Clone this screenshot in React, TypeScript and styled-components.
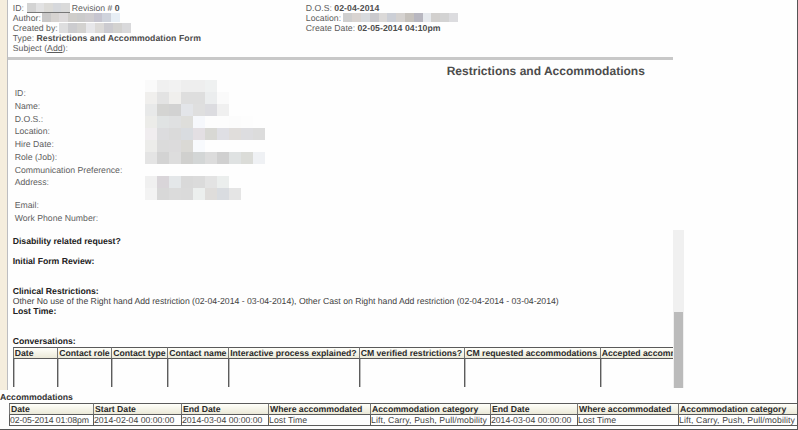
import React from "react";
import styled, { createGlobalStyle } from "styled-components";

const GlobalStyle = createGlobalStyle`
  *, *::before, *::after { box-sizing: border-box; }
  body {
    margin: 0;
    background: #fff;
    font-family: "Liberation Sans", Arial, sans-serif;
    font-size: 8.7px;
    text-rendering: geometricPrecision;
  }
`;

const Page = styled.div`
  width: 798px;
  height: 430px;
  overflow: hidden;
  display: flex;
  flex-direction: column;
  background: #fefefe;
  border-right: 1px solid #555;
  border-bottom: 1px solid #555;
`;

const Workspace = styled.div`
  display: flex;
  flex: none;
  height: 390px;
`;

const Gutter = styled.div`
  flex: none;
  width: 8px;
  background: #f5eddd;
  border-right: 1px solid #bdbdc0;
`;

const Document = styled.div`
  width: 665px;
  flex: none;
  overflow: hidden;
`;

const Meta = styled.header`
  display: grid;
  grid-template-columns: 293px 1fr;
  height: 60px;
  padding: 2.5px 0 0 4.8px;
  border-bottom: 3px solid #c8c8c8;
  color: #5c5c5c;
`;

const MetaLine = styled.div`
  display: flex;
  height: 10px;
  line-height: 10px;
  white-space: pre;
`;

const Strong = styled.b`
  color: #4c4c4c;
  letter-spacing: 0.06px;
`;

const AddLink = styled.a`
  text-decoration: underline;
`;

const Redacted = styled.span<{ $left?: number; $right?: number; $line?: boolean }>`
  display: flex;
  height: 10px;
  margin: 0 ${(p) => p.$right ?? 0}px 0 ${(p) => p.$left ?? 0}px;
  border-bottom: ${(p) => (p.$line ? "1px solid #777" : "none")};
`;

const Block = styled.i<{ $tone: string; $w: number; $h: number }>`
  flex: none;
  width: ${(p) => p.$w}px;
  height: ${(p) => p.$h}px;
  background: ${(p) => p.$tone};
`;

const Title = styled.h1`
  margin: 0;
  height: 20px;
  padding-left: 438.7px;
  font-size: 12px;
  letter-spacing: 0.02px;
  line-height: 22px;
  color: #4c4c4c;
  white-space: nowrap;
`;

const Profile = styled.section`
  display: grid;
  grid-template-columns: 130px 1fr;
  height: 155px;
  padding-left: 6.7px;
  color: #606060;
`;

const Labels = styled.div`
  padding-top: 7px;
`;

const Label = styled.div<{ $gap?: number }>`
  height: 12.75px;
  line-height: 12.75px;
  margin-top: ${(p) => p.$gap ?? 0}px;
  white-space: nowrap;
`;

const MosaicRow = styled.div`
  display: flex;
  height: 12px;
`;

const Notes = styled.section`
  height: 155px;
  padding: 1px 0 0 4.7px;
  color: #222;
`;

const Note = styled.div<{ $after?: number; $bold?: boolean }>`
  height: 10px;
  line-height: 10px;
  margin-bottom: ${(p) => p.$after ?? 0}px;
  font-weight: ${(p) => (p.$bold ? 700 : 400)};
  letter-spacing: ${(p) => (p.$bold ? -0.02 : -0.015)}px;
  color: ${(p) => (p.$bold ? "#222" : "#444")};
  white-space: nowrap;
`;

const ConversationGrid = styled.div`
  display: grid;
  grid-template-columns: 44.5px 54px 56px 61px 130.5px 105.5px 135.5px 150px;
  width: 737px;
`;

const HeadCell = styled.div`
  height: 12px;
  padding-left: 1px;
  line-height: 10.5px;
  font-weight: 700;
  color: #2b2b2b;
  background: linear-gradient(#fffffa, #ebe9d8);
  border: 1px solid #5a5a5a;
  border-left-color: #777;
  border-right-width: 0;
  letter-spacing: -0.02px;
  white-space: nowrap;
`;

const EmptyCell = styled.div`
  height: 28px;
  border-left: 1px solid #5c5c5c;
  box-shadow: inset 1px 0 #bbb;
`;

const ScrollTrack = styled.div`
  flex: none;
  width: 11px;
  height: 158px;
  margin-top: 230px;
  padding: 82px 1px 0;
  background: #f0f0f0;
`;

const ScrollThumb = styled.div`
  height: 76px;
  background: #bbb;
`;

const Accommodations = styled.section`
  height: 39px;
`;

const Caption = styled.div`
  height: 13px;
  line-height: 14px;
  font-weight: 700;
  color: #333;
`;

const AccommodationGrid = styled.div`
  display: grid;
  grid-template-columns: 84px 88px 87px 102px 120px 87px 101px 119px;
  margin-left: 9px;
  width: 788px;
`;

const DataCell = styled.div<{ $track: number }>`
  height: 11px;
  line-height: 10.5px;
  letter-spacing: ${(p) => p.$track}px;
  color: #444;
  border-left: 1px solid #5a5a5a;
  border-bottom: 1px solid #5a5a5a;
  white-space: nowrap;
`;

const authorTones = ["#c9c8c8", "#d6d3d1", "#dddadb", "#cfcdca", "#cbcbcb", "#cfcdd0", "#c6c5d0", "#cfd3dc", "#e7eef5"];
const createdTones = ["#dededf", "#cccccf", "#d3d2d0", "#e7e7ea", "#dcdad8", "#cccbd0", "#d3d2d0", "#d9d9db"];
const idTones = ["#d3d3d3", "#e2e2e3", "#dcdbd8", "#d6d8dc", "#dadada"];
const placeTones = ["#cfcfcf", "#d9d4d1", "#d7dadd", "#cac9cd", "#dbd9d8", "#cccfd6", "#d5d2d0", "#c6c2bd", "#b8b7c0", "#e6e9ed", "#d2d0ce", "#d3d3d3", "#dcdcdf"];

const mosaic: string[][] = [
  ["#fafafa", "#f0f0f0", "#f2f2f2", "#eeeeee", "#eeeeee", "#eff1f1"],
  ["#f0efed", "#e3e3e3", "#f0efed", "#dedede", "#dedede", "#ebedee", "#fafafa"],
  ["#e8e9e9", "#d4d4d2", "#d2d2d2", "#e3e5e9", "#dfdfdf", "#dcdce0", "#f0f0f0"],
  ["#ecece9", "#e0e3e3", "#dfe0e1", "#dededb", "#f6f8fc", "#fdfdfd", "#fdfdfd", "#fcfcfc", "#fdfdfd"],
  ["#f0edef", "#dcdcde", "#dadada", "#d9dce0", "#e3dfe3", "#d8d8d4", "#dfdfe4", "#e0dddb", "#dddde0", "#dcdcdc"],
  ["#ececea", "#dbdbdb", "#dcdbdc", "#dad9d5", "#f8fafd"],
  ["#e4e4e4", "#d3d3d3", "#dddddd", "#d0d0ce", "#d3d6d6", "#dcdcdc", "#d0d0d0", "#dfe2e2", "#dbdcd8", "#eff1f4"],
  [],
  ["#f0f0f0", "#d9d5d9", "#e4e7e9", "#d9d9d9", "#dbdbdb", "#e3e3e3", "#ebeeed"],
  ["#f3f3f3", "#d8d8d8", "#dbdbdb", "#dadada", "#ecefee", "#dfdddb", "#d9dce0", "#e5e5e5"],
];

const conversationHeads = ["Date", "Contact role", "Contact type", "Contact name", "Interactive process explained?", "CM verified restrictions?", "CM requested accommodations", "Accepted accommodations"];
const accommodationHeads = ["Date", "Start Date", "End Date", "Where accommodated", "Accommodation category", "End Date", "Where accommodated", "Accommodation category"];
const accommodationRow: [string, number][] = [
  ["02-05-2014 01:08pm", -0.1],
  ["2014-02-04 00:00:00", -0.02],
  ["2014-03-04 00:00:00", -0.02],
  ["Lost Time", 0.06],
  ["Lift, Carry, Push, Pull/mobility", 0.1],
  ["2014-03-04 00:00:00", -0.02],
  ["Lost Time", 0.06],
  ["Lift, Carry, Push, Pull/mobility", 0.1],
];

function Tones({ tones, w, h }: { tones: string[]; w: number; h: number }) {
  return (
    <>
      {tones.map((tone, i) => (
        <Block key={i} $tone={tone} $w={w} $h={h} />
      ))}
    </>
  );
}

export default function App() {
  return (
    <>
      <GlobalStyle />
      <Page>
        <Workspace>
          <Gutter />
          <Document>
            <Meta>
              <div>
                <MetaLine>ID: <Redacted $line $left={1} $right={2}><Tones tones={idTones} w={8.5} h={9} /></Redacted>Revision # <Strong>0</Strong></MetaLine>
                <MetaLine>Author: <Redacted $left={-1}><Tones tones={authorTones} w={8.6} h={9} /></Redacted></MetaLine>
                <MetaLine>Created by: <Redacted $left={-1}><Tones tones={createdTones} w={9} h={10} /></Redacted></MetaLine>
                <MetaLine>Type: <Strong>Restrictions and Accommodation Form</Strong></MetaLine>
                <MetaLine>Subject (<AddLink>Add</AddLink>):</MetaLine>
              </div>
              <div>
                <MetaLine>D.O.S: <Strong>02-04-2014</Strong></MetaLine>
                <MetaLine>Location: <Redacted><Tones tones={placeTones} w={8.8} h={9.5} /></Redacted></MetaLine>
                <MetaLine>Create Date: <Strong>02-05-2014 04:10pm</Strong></MetaLine>
              </div>
            </Meta>
            <Title>Restrictions and Accommodations</Title>
            <Profile>
              <Labels>
                {["ID:", "Name:", "D.O.S.:", "Location:", "Hire Date:", "Role (Job):", "Communication Preference:", "Address:"].map((t) => (
                  <Label key={t}>{t}</Label>
                ))}
                <Label $gap={10}>Email:</Label>
                <Label>Work Phone Number:</Label>
              </Labels>
              <div>
                {mosaic.map((tones, i) => (
                  <MosaicRow key={i}><Tones tones={tones} w={12} h={12} /></MosaicRow>
                ))}
              </div>
            </Profile>
            <Notes>
              <Note $bold $after={10}>Disability related request?</Note>
              <Note $bold $after={20}>Initial Form Review:</Note>
              <Note $bold>Clinical Restrictions:</Note>
              <Note>Other No use of the Right hand Add restriction (02-04-2014 - 03-04-2014), Other Cast on Right hand Add restriction (02-04-2014 - 03-04-2014)</Note>
              <Note $bold $after={20}>Lost Time:</Note>
              <Note $bold $after={1}>Conversations:</Note>
              <ConversationGrid>
                {conversationHeads.map((t) => <HeadCell key={t}>{t}</HeadCell>)}
                {conversationHeads.map((t) => <EmptyCell key={t} />)}
              </ConversationGrid>
            </Notes>
          </Document>
          <ScrollTrack><ScrollThumb /></ScrollTrack>
        </Workspace>
        <Accommodations>
          <Caption>Accommodations</Caption>
          <AccommodationGrid>
            {accommodationHeads.map((t, i) => <HeadCell key={i}>{t}</HeadCell>)}
            {accommodationRow.map(([t, track], i) => <DataCell key={i} $track={track}>{t}</DataCell>)}
          </AccommodationGrid>
        </Accommodations>
      </Page>
    </>
  );
}
